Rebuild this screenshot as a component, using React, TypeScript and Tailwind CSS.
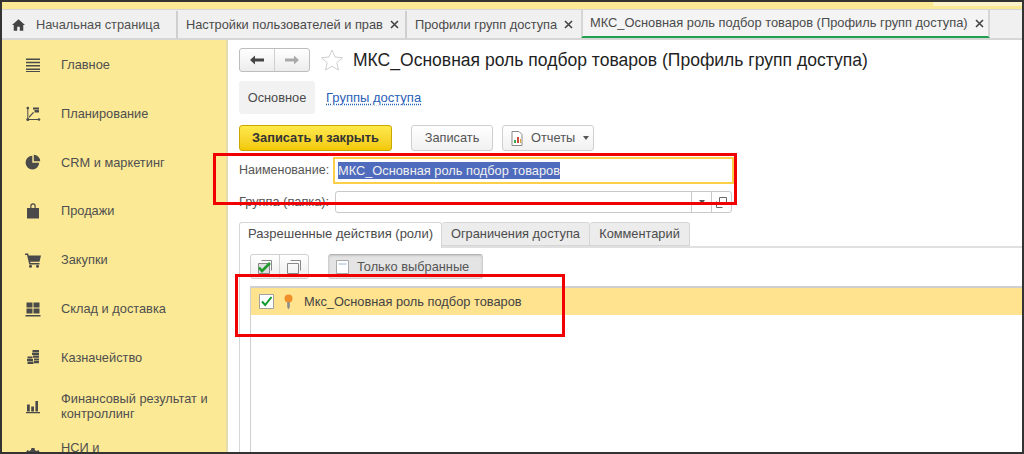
import React from "react";

const Icon = ({ children }: { children: React.ReactNode }) => (
  <svg width="16" height="16" viewBox="0 0 16 16" fill="#4a4a4a" className="shrink-0">{children}</svg>
);

const items: { label: React.ReactNode; icon: React.ReactNode; h: string }[] = [
  { label: "Главное", h: "h-[49px]", icon: <Icon><path d="M1 1.500h14v1.500H1zM1 4.800h14v1.500H1zM1 8.100h14v1.500H1zM1 11.400h14v1.500H1zM1 14h14v1H1z" /></Icon> },
  { label: "Планирование", h: "h-[49px]", icon: <Icon><path d="M2.300 2h1v11h10v1h-11z" /><path d="M3.500 11l4.500-5 1 .8-4.700 5z" /><path d="M8 1.500h6v2H8zM9.500 4h4.500v2.500H9.500z" /><circle cx="2.800" cy="2" r="1.300" /><circle cx="2.800" cy="13.500" r="1.500" /><circle cx="14" cy="13.500" r="1.300" /></Icon> },
  { label: "CRM и маркетинг", h: "h-[48px]", icon: <Icon><path d="M7.300 1.800a6.800 6.800 0 1 0 6.900 6.900H7.300z" /><path d="M8.800 .8v6.400h6.400a6.400 6.400 0 0 0-6.400-6.400z" /></Icon> },
  { label: "Продажи", h: "h-[49px]", icon: <Icon><path d="M2 5h12v10.500H2z" /><path d="M5.300 5V3a2.700 2.700 0 0 1 5.400 0v2H9.500V3a1.500 1.500 0 0 0-3 0v2z" /></Icon> },
  { label: "Закупки", h: "h-[49px]", icon: <Icon><path d="M0 1.500h3.200l.5 2H16l-1.500 6.300H5.200l.3 1.300H14.500v1.500H4.300L2 3H0z" /><circle cx="5.500" cy="14.300" r="1.500" /><circle cx="12.500" cy="14.300" r="1.500" /></Icon> },
  { label: "Склад и доставка", h: "h-[49px]", icon: <Icon><path d="M1.500 1.500h6v5h-6zM8.500 1.500h6v5h-6zM1.500 7.500h6v5h-6zM8.500 7.500h6v5h-6zM.5 14h15v1.500H.5z" /></Icon> },
  { label: "Казначейство", h: "h-[48px]", icon: <Icon><path d="M7.500 1h6.500v2.200H7.500zM7 3.800h7V6H7zM8 6.600h6v2.200H8zM2.500 7.500h5v2H2.500zM2 10h6v2H2zM2.500 12.500h6v2.500h-6zM9 9.500h5v2H9zM9 12h5v2.200H9z" /></Icon> },
  { label: <>Финансовый результат и<br />контроллинг</>, h: "h-[49px]", icon: <Icon><path d="M2 6.500h2.800v7H2zM6.200 8.500H9v5H6.200zM10.400 3H13v10.500h-2.600zM1 14h14v1.200H1z" /></Icon> },
  { label: <>НСИ и<br />&nbsp;</>, h: "h-[49px]", icon: <Icon><path d="M6.500 1h3l.4 2 1.700.9 1.900-.8 1.500 2.600-1.500 1.300v1.900l1.500 1.300-1.500 2.600-1.900-.8-1.700.9-.4 2h-3l-.4-2-1.700-.9-1.900.8L.8 10.200l1.500-1.300V7L.8 5.700l1.500-2.600 1.900.8 1.700-.9z" /></Icon> },
];

const TabClose = () => (
  <svg width="9" height="9" viewBox="0 0 9 9" className="shrink-0"><path d="M1 1l7 7M8 1L1 8" stroke="#444" strokeWidth="1.600" /></svg>
);

export default function App() {
  return (
    <div className="w-[1024px] h-[454px] overflow-hidden bg-white relative border-2 border-[#333] text-[#4b4b4b] text-[12.8px] font-['Liberation_Sans',Arial,sans-serif]">
      <div className="h-[7px] bg-[#fbe995] flex justify-end">
        <div className="w-[89px] h-[4px] bg-[#fdf3c8]" />
      </div>
      <div className="h-[31px] flex bg-[#f0f0f0] border-b-2 border-t border-[#d6d6d6] pt-[1px]">
        <div className="w-[176px] flex items-center pl-[10px] border-r-2 border-[#cfcfcf] gap-[11px]">
          <svg width="13" height="12" viewBox="0 0 15 13" fill="#444"><path d="M7.500 0L15 6.500h-2V13H9V8.500H6V13H2V6.500H0z" /></svg>
          <span className="text-[#505050]">Начальная страница</span>
        </div>
        <div className="w-[229px] flex items-center pl-[8px] gap-[7px] border-r-2 border-[#cfcfcf]">
          <span className="whitespace-nowrap">Настройки пользователей и прав</span><TabClose />
        </div>
        <div className="w-[174px] flex items-center pl-[8px] gap-[7px]">
          <span className="whitespace-nowrap">Профили групп доступа</span><TabClose />
        </div>
        <div className="w-[409px] flex items-center pl-[7px] gap-[7px] bg-[#f4f4f4] border-x-2 border-[#d6d6d6] border-b-2 border-b-[#22a050] -mt-[1px] text-[12.87px]">
          <span className="whitespace-nowrap">МКС_Основная роль подбор товаров (Профиль групп доступа)</span><TabClose />
        </div>
        <div className="flex-1" />
      </div>
      <div className="flex h-[412px]">
        <div className="w-[226px] shrink-0 bg-[#fbe995] border-r-2 border-[#e4dcae] overflow-hidden">
          {items.map((it, i) => (
            <div key={i} className={`flex items-center pl-[23px] gap-[20px] leading-[15px] text-[#4f4f4f] ${it.h}`}>
              {it.icon}<div>{it.label}</div>
            </div>
          ))}
        </div>
        <div className="flex-1 min-w-0 pl-[11px] pt-[8px]">
          <div className="flex items-center h-[24px]">
            <div className="flex h-[24px] w-[71px] rounded-[3px] border border-[#bdbdbd] bg-gradient-to-b from-white to-[#ececec]">
              <div className="w-[35px] flex items-center justify-center border-r border-[#cfcfcf]">
                <svg width="14" height="10" viewBox="0 0 14 10"><path d="M0 5l5-4.500V3.500h9v3H5v3z" fill="#444" /></svg>
              </div>
              <div className="flex-1 flex items-center justify-center">
                <svg width="14" height="10" viewBox="0 0 14 10"><path d="M14 5L9 .5V3.500H0v3h9v3z" fill="#a9a9a9" /></svg>
              </div>
            </div>
            <svg width="24" height="24" viewBox="0 0 24 24" className="ml-[10px]"><path d="M12 2l3 7 7.500.7-5.700 5 1.700 7.300L12 18.200 5.500 22l1.700-7.300-5.700-5L9 9z" fill="none" stroke="#cfcfcf" /></svg>
            <div className="ml-[9px] text-[17.55px] text-[#1f1f1f] whitespace-nowrap">МКС_Основная роль подбор товаров (Профиль групп доступа)</div>
          </div>
          <div className="flex items-center mt-[9px] h-[33px]">
            <div className="w-[76px] h-[33px] bg-[#f2f2f2] rounded-[3px] flex items-center justify-center">Основное</div>
            <a className="ml-[11px] text-[13px] text-[#2a5fb8] underline decoration-dotted underline-offset-2">Группы доступа</a>
          </div>
          <div className="flex items-center mt-[11px] h-[26px]">
            <div className="w-[153px] h-[26px] rounded-[3px] border border-[#c9a800] bg-gradient-to-b from-[#ffe94a] to-[#f2c900] flex items-center justify-center font-bold text-[#333]">Записать и закрыть</div>
            <div className="ml-[19px] w-[82px] h-[26px] rounded-[3px] border border-[#cfcfcf] bg-gradient-to-b from-white to-[#f1f1f1] flex items-center justify-center text-[#555]">Записать</div>
            <div className="ml-[9px] w-[92px] h-[26px] rounded-[3px] border border-[#cfcfcf] bg-gradient-to-b from-white to-[#f1f1f1] flex items-center pl-[7px] gap-[7px] text-[#555]">
              <svg width="14" height="15" viewBox="0 0 14 15"><path d="M2 .5h7l3 3v11H2z" fill="#fff" stroke="#8a8a8a" /><path d="M4 9h2v3H4z" fill="#3aa655" /><path d="M7 6h2v6H7z" fill="#d04a3a" /><path d="M10 8h1v4h-1z" fill="#e2a02c" /></svg>
              <span>Отчеты</span>
              <svg width="6" height="4" viewBox="0 0 6 4" className="ml-[1px]"><path d="M0 0h6L3 4z" fill="#555" /></svg>
            </div>
          </div>
          <div className="flex items-center mt-[6px] h-[27px]">
            <div className="w-[94px] text-[12.5px] text-[#555]">Наименование:</div>
            <div className="w-[401px] h-[27px] border-2 border-[#fbcf47] flex items-center pl-[3px] text-[#fff]">
              <span className="bg-[#4f6bbd] text-[#f1f1f1] leading-[17px] whitespace-nowrap">МКС_Основная роль подбор товаров</span>
            </div>
          </div>
          <div className="flex items-center mt-[7px] h-[22px]">
            <div className="w-[96px] text-[#555]">Группа (папка):</div>
            <div className="w-[397px] h-[22px] border border-[#c9c9c9] rounded-[3px] flex justify-end">
              <div className="w-[20px] border-l border-[#c9c9c9] flex items-center justify-center">
                <svg width="6" height="4" viewBox="0 0 6 4"><path d="M0 0h6L3 4z" fill="#555" /></svg>
              </div>
              <div className="w-[20px] border-l border-[#c9c9c9] flex items-center justify-center">
                <svg width="11" height="11" viewBox="0 0 11 11" fill="none" stroke="#666"><path d="M3.500.5h7v7h-7zM.5 4.500v6h6" /></svg>
              </div>
            </div>
          </div>
          <div className="flex mt-[9px] h-[26px] border-b-2 border-[#e0e0e0] -mr-[2px]">
            <div className="w-[203px] h-[26px] pb-[3px] border border-b-0 border-[#d6d6d6] rounded-t-[3px] bg-white flex items-center justify-center relative z-10 text-[13px]">Разрешенные действия (роли)</div>
            <div className="w-[148px] h-[24px] border border-[#d6d6d6] border-l-0 rounded-t-[3px] bg-[#ececec] flex items-center justify-center">Ограничения доступа</div>
            <div className="w-[100px] h-[24px] border border-[#d6d6d6] border-l-0 rounded-t-[3px] bg-[#ececec] flex items-center justify-center">Комментарий</div>
          </div>
          <div className="border-l border-[#d6d6d6] pl-[10px] pt-[6px] h-[232px]">
            <div className="flex items-center h-[25px]">
              <div className="flex w-[59px] h-[25px] rounded-[3px] border border-[#d0d0d0] bg-gradient-to-b from-white to-[#eeeeee]">
                <div className="w-[29px] flex items-center justify-center border-r border-[#d0d0d0]">
                  <svg width="16" height="16" viewBox="0 0 16 16"><path d="M4.500 1.500h10v10" fill="none" stroke="#888" /><path d="M1.500 4.500h11v10h-11z" fill="#dfdfdf" stroke="#888" /><path d="M2 8.500l3 3.500 8-8" fill="none" stroke="#1f9a2e" strokeWidth="2.600" /></svg>
                </div>
                <div className="flex-1 flex items-center justify-center">
                  <svg width="16" height="16" viewBox="0 0 16 16" fill="none" stroke="#888"><path d="M4.500 1.500h10v10M1.500 4.500h11v10h-11z" /></svg>
                </div>
              </div>
              <div className="ml-[19px] w-[155px] h-[25px] rounded-[3px] bg-[#e4e4e4] border border-[#cfcfcf] border-t-[#b5b5b5] shadow-[inset_0_1px_2px_#c4c4c4] flex items-center pl-[7px] gap-[8px] text-[#555]">
                <svg width="13" height="14" viewBox="0 0 13 14"><path d="M.5.500h12v13H.5z" fill="#fff" stroke="#aaa" /><path d="M2.500 3h8v2h-8z" fill="#cfdcec" /></svg>
                <span>Только выбранные</span>
              </div>
            </div>
            <div className="mt-[7px] border-t-2 border-l border-[#cfcfcf] h-[170px]">
              <div className="h-[27px] bg-[#ffe38f] flex items-center pl-[8px] text-[#444]">
                <svg width="15" height="15" viewBox="0 0 15 15"><path d="M.5.500h14v14H.5z" fill="#fff" stroke="#a0a0a0" /><path d="M3 7.500l3.200 3.500L12.500 3" fill="none" stroke="#0c9a2d" strokeWidth="2" /></svg>
                <svg width="11" height="16" viewBox="0 0 11 16" className="ml-[9px]"><circle cx="5.500" cy="4.500" r="4" fill="#ee8f2a" /><path d="M4.200 8h2.600v5l-1.300 2.500-1.300-2.500z" fill="#8b8b8b" /></svg>
                <span className="ml-[10px]">Мкс_Основная роль подбор товаров</span>
              </div>
            </div>
          </div>
        </div>
      </div>
      <div className="absolute left-[211px] top-[151px] w-[524px] h-[52px] border-[3px] border-[#f00000]" />
      <div className="absolute left-[233px] top-[272px] w-[330px] h-[63px] border-[3px] border-[#f00000]" />
    </div>
  );
}
